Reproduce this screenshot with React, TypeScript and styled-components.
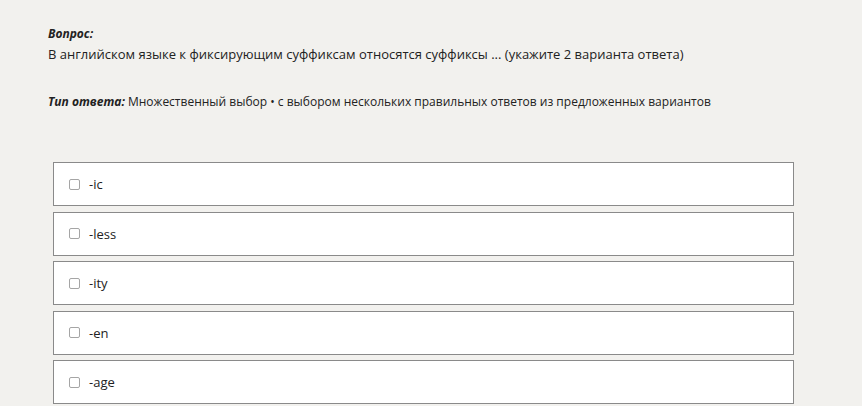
import React from 'react'
import styled, { createGlobalStyle } from 'styled-components'

const GlobalStyle = createGlobalStyle`
  html, body {
    margin: 0;
    padding: 0;
    background: #f2f1ee;
  }
  body {
    font-family: 'Open Sans', 'Noto Sans', sans-serif;
    font-size: 13px;
    color: #222;
  }
`

const Page = styled.div`
  padding: 23px 0 0 48px;
  width: 746px;
`

const Block = styled.div`
  line-height: 20px;
`

const Heading = styled.span`
  font-weight: 700;
  font-style: italic;
  font-size: 12px;
`

const TypeLine = styled(Block)`
  margin-top: 28px;
  font-size: 12px;
`

const Options = styled.div`
  margin: 50px 0 0 5px;
  display: flex;
  flex-direction: column;
  gap: 5.5px;
`

const Option = styled.label`
  display: flex;
  align-items: center;
  height: 42px;
  padding-left: 15px;
  background: #fff;
  border: 1px solid #8a8a8a;
  cursor: pointer;
`

const Box = styled.input`
  appearance: none;
  width: 11px;
  height: 11px;
  margin: 0 9px 0 0;
  border: 1px solid #a5a5a5;
  border-radius: 2px;
  background: #fff;
`

const options = ['-ic', '-less', '-ity', '-en', '-age']

export default function App() {
  return (
    <Page>
      <GlobalStyle />
      <Block>
        <Heading>Вопрос:</Heading>
        <div>
          В английском языке к фиксирующим суффиксам относятся суффиксы ... (укажите 2 варианта ответа)
        </div>
      </Block>
      <TypeLine>
        <Heading>Тип ответа:</Heading> Множественный выбор • с выбором нескольких правильных ответов из
        предложенных вариантов
      </TypeLine>
      <Options>
        {options.map((o) => (
          <Option key={o}>
            <Box type="checkbox" />
            {o}
          </Option>
        ))}
      </Options>
    </Page>
  )
}
